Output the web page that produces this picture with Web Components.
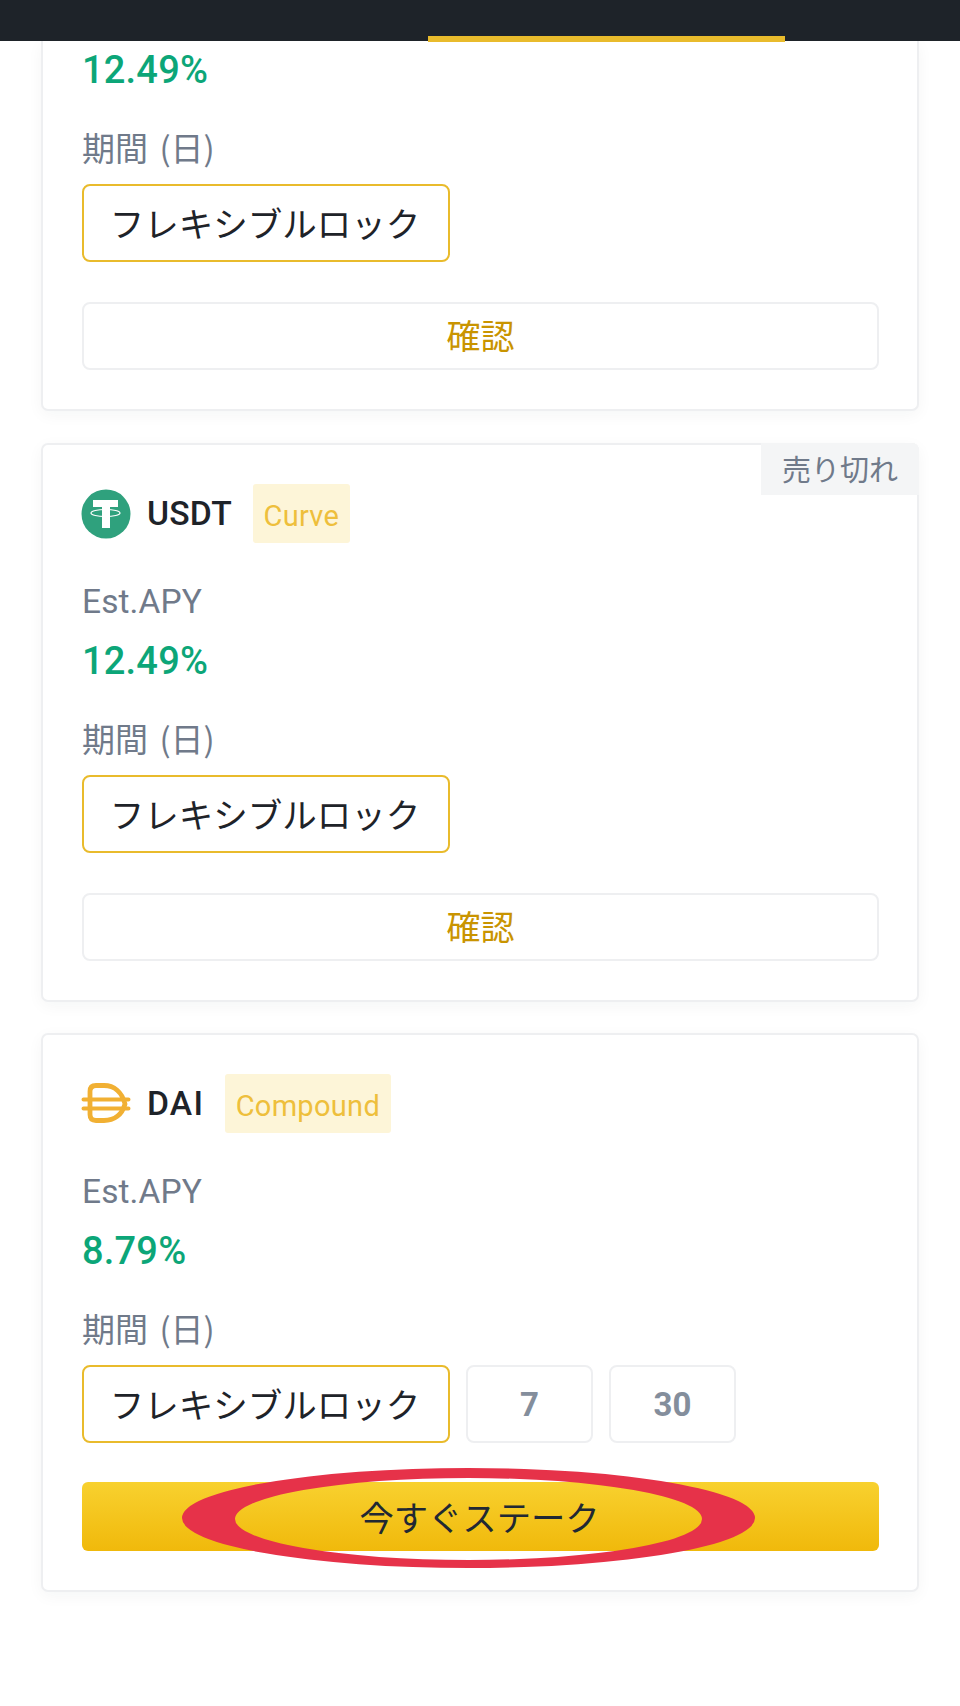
<!DOCTYPE html>
<html lang="ja">
<head>
<meta charset="utf-8">
<title>Stake</title>
<style>
  html, body { margin: 0; background: #fff; }
  body { font-family: Roboto, "Noto Sans CJK JP", sans-serif; width: 960px; height: 1706px; overflow: hidden; }
  .last { margin-top: -1px; }
  .dai-name { letter-spacing: 1.2px; }
</style>
</head>
<body>
<app-header></app-header>
<stake-list>
  <stake-card clipped>
    <span slot="rate">12.49%</span>
    <term-option slot="terms" selected>フレキシブルロック</term-option>
    <action-button slot="action">確認</action-button>
  </stake-card>

  <stake-card>
    <sold-badge slot="badge">売り切れ</sold-badge>
    <coin-icon slot="icon" coin="usdt"></coin-icon>
    <span slot="name">USDT</span>
    <span slot="tag">Curve</span>
    <span slot="rate">12.49%</span>
    <term-option slot="terms" selected>フレキシブルロック</term-option>
    <action-button slot="action">確認</action-button>
  </stake-card>

  <stake-card class="last">
    <coin-icon slot="icon" coin="dai"></coin-icon>
    <span slot="name" class="dai-name">DAI</span>
    <span slot="tag">Compound</span>
    <span slot="rate">8.79%</span>
    <term-option slot="terms" selected>フレキシブルロック</term-option>
    <term-option slot="terms">7</term-option>
    <term-option slot="terms">30</term-option>
    <action-button slot="action" primary circled>今すぐステーク</action-button>
  </stake-card>
</stake-list>

<template id="t-header">
  <style>
    :host { display: flex; position: relative; z-index: 2; height: 41px; background: #1e2329; padding-left: 428px; box-sizing: border-box; }
    .tab { width: 357px; height: 6px; margin-top: 36px; background: #e9bb2c; }
  </style>
  <div class="tab"></div>
</template>

<template id="t-list">
  <style>
    :host { display: flex; flex-direction: column; gap: 32px; padding: 0 41px; }
  </style>
  <slot></slot>
</template>

<template id="t-card">
  <style>
    :host {
      display: block; position: relative; box-sizing: border-box; background: #fff;
      border: 2px solid #eeeff1; border-radius: 7px; padding: 39px 38px 39px 39px;
      box-shadow: 0 4px 16px rgba(30, 35, 41, .045);
    }
    :host([clipped]) { border-top: 0; border-radius: 0 0 7px 7px; padding-top: 9px; }
    :host([clipped]) .head, :host([clipped]) .apy { display: none; }
    :host([clipped]) .rate { margin-top: 0; }
    .head { display: flex; align-items: center; height: 59px; margin-bottom: 39px; }
    .head ::slotted(coin-icon) { margin-left: -1px; }
    .name { font-size: 33.7px; font-weight: 500; color: #1e2329; margin-left: 16px; letter-spacing: .2px; }
    .tag {
      display: flex; align-items: center; box-sizing: border-box; height: 59px; padding: 4px 10.500px 0; margin-left: 21px;
      background: #fdf5d8; color: #eebf3c; border-radius: 3px; font-size: 29px; letter-spacing: .3px;
    }
    .apy, .period { font-size: 33.500px; line-height: 40px; color: #707a8a; }
    .apy { letter-spacing: .1px; }
    .rate { font-size: 38px; line-height: 40px; font-weight: 500; color: #0ca678; margin-top: 19px; letter-spacing: .2px; }
    .period { margin-top: 37px; font-family: "Noto Sans CJK JP", sans-serif; font-size: 33px; word-spacing: 4px; }
    .terms { display: flex; gap: 16px; margin-top: 17px; }
  </style>
  <slot name="badge"></slot>
  <div class="head">
    <slot name="icon"></slot>
    <span class="name"><slot name="name"></slot></span>
    <span class="tag"><slot name="tag"></slot></span>
  </div>
  <div class="apy">Est.APY</div>
  <div class="rate"><slot name="rate"></slot></div>
  <div class="period">期間 (日)</div>
  <div class="terms"><slot name="terms"></slot></div>
  <slot name="action"></slot>
</template>

<template id="t-badge">
  <style>
    :host {
      position: absolute; top: -2px; right: -2px; width: 158px; height: 52px; padding-bottom: 2px; box-sizing: border-box; display: flex; align-items: center; justify-content: center;
      background: #f4f5f6; color: #707a8a; font-family: "Noto Sans CJK JP", sans-serif; font-size: 29px; border-top-right-radius: 7px;
    }
  </style>
  <slot></slot>
</template>

<template id="t-term">
  <style>
    :host {
      display: flex; align-items: center; justify-content: center; box-sizing: border-box; height: 78px; width: 127px;
      border: 2px solid #eeeff1; border-radius: 8px; color: #848e9c; font-size: 33px; font-weight: 700;
    }
    :host([selected]) {
      width: 368px; padding: 0 2px 3px 0; border-color: #e9bb2c; color: #1e2329; font-family: "Noto Sans CJK JP", sans-serif; font-size: 34.500px; font-weight: 400; white-space: nowrap;
    }
  </style>
  <slot></slot>
</template>

<template id="t-action">
  <style>
    :host {
      display: flex; position: relative; align-items: center; justify-content: center; box-sizing: border-box; height: 68px; margin-top: 40px; padding-bottom: 3px;
      border: 2px solid #eeeff1; border-radius: 8px; color: #c99400; font-family: "Noto Sans CJK JP", sans-serif; font-size: 34px;
    }
    :host([primary]) {
      height: 69px; margin-top: 39px; padding: 0 2px 2px 0; border: 0; color: #212833; font-size: 34.300px; border-radius: 6px;
      background: linear-gradient(180deg, #f8d12f 0%, #f0b90b 100%);
    }
    svg { position: absolute; display: none; left: 99px; top: -15px; width: 575px; height: 102px; pointer-events: none; }
    :host([circled]) svg { display: block; }
    span { position: relative; z-index: 1; }
  </style>
  <svg viewBox="0 0 575 102"><path fill="#e63249" fill-rule="evenodd" d="M1 51a286.500 50 0 1 0 573 0a286.500 50 0 1 0 -573 0Z M54 52a233.500 41 0 1 0 467 0a233.500 41 0 1 0 -467 0Z"/></svg>
  <span><slot></slot></span>
</template>

<script>
  const define = (tag, tpl) => {
    customElements.define(tag, class extends HTMLElement {
      constructor() {
        super();
        this.attachShadow({ mode: 'open' }).appendChild(document.getElementById(tpl).content.cloneNode(true));
      }
    });
  };
  define('app-header', 't-header');
  define('stake-list', 't-list');
  define('stake-card', 't-card');
  define('sold-badge', 't-badge');
  define('term-option', 't-term');
  define('action-button', 't-action');

  const ICONS = {
    usdt: `<svg viewBox="0 0 50 50" width="50" height="50">
      <circle cx="25" cy="25" r="24.500" fill="#2fa17d"/>
      <path fill="#fff" d="M12 11H37V18H29V39H21V18H12Z"/>
      <ellipse cx="24.500" cy="24" rx="14.500" ry="3.500" fill="none" stroke="#fff" stroke-width="1.200"/>
    </svg>`,
    dai: `<svg viewBox="0 0 50 50" width="50" height="50" fill="none" stroke="#f1b033" stroke-linecap="round" stroke-linejoin="round" stroke-width="4.800">
      <path d="M9 12.500Q9 6.500 15 6.500H23C33 6.500 41 13 44 25C41 36 33 41.500 23 41.500H15Q9 41.500 9 35.500Z"/>
      <path d="M2.500 20.500H47.500M2.500 29.500H47.500" stroke-width="4"/>
    </svg>`
  };
  customElements.define('coin-icon', class extends HTMLElement {
    constructor() {
      super();
      this.attachShadow({ mode: 'open' }).innerHTML =
        `<style>:host{display:block;width:50px;height:50px}svg{display:block}</style>` + ICONS[this.getAttribute('coin')];
    }
  });
</script>
</body>
</html>
